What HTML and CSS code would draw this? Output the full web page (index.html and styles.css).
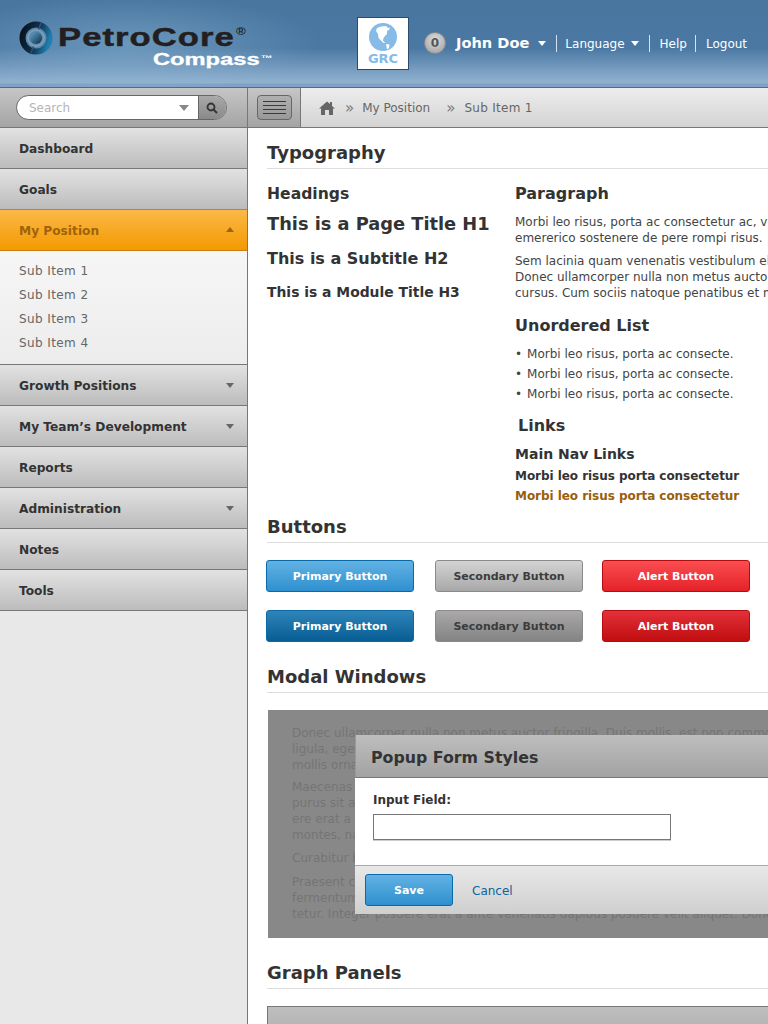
FILE: index.html
```html
<!DOCTYPE html>
<html lang="en">
<head>
  <meta charset="UTF-8">
  <title>PetroCore Compass - Style Guide</title>
  <link rel="stylesheet" href="styles.css">
</head>
<body>
  <header class="topbar">
    <div class="logo">
      <svg class="logo-mark" width="34" height="34" viewBox="0 0 34 34">
        <defs>
          <linearGradient id="ring" x1="0" y1="0.3" x2="1" y2="0.6">
            <stop offset="0" stop-color="#0b1522"/>
            <stop offset="0.5" stop-color="#0f2f4c"/>
            <stop offset="1" stop-color="#1f7fae"/>
          </linearGradient>
          <linearGradient id="core" x1="0" y1="0" x2="1" y2="1">
            <stop offset="0" stop-color="#5fa6c8"/>
            <stop offset="1" stop-color="#0c2c48"/>
          </linearGradient>
        </defs>
        <circle cx="17" cy="17" r="13.5" fill="none" stroke="url(#ring)" stroke-width="6"/>
        <path d="M22 2 L19 10 M12 32 L15 24" stroke="#2a5578" stroke-width="1.6"/>
        <circle cx="17" cy="17" r="8" fill="none" stroke="#7e9db5" stroke-width="2"/>
        <circle cx="17" cy="17" r="6" fill="url(#core)"/>
      </svg>
      <div class="logo-words">
        <div class="logo-name">PetroCore<sup>®</sup></div>
        <div class="logo-sub">Compass<sup>™</sup></div>
      </div>
    </div>
    <div class="grc">
      <svg width="28" height="28" viewBox="0 0 28 28">
        <circle cx="14" cy="14" r="14" fill="#85bbe6"/>
        <path d="M8 5 L12 3.500 L17 3 L19 5 L21 4.500 L20 7 L18 8 L18 11 L16 13 L14.500 15 L14 18 L16.500 20 L14.500 20 L11.500 17 L9.500 15 L9 11 L7 8 Z" fill="#fff"/>
        <path d="M17 21 L20.500 21.500 L20 25 L18 26.500 Z" fill="#fff"/>
      </svg>
      <span>GRC</span>
    </div>
    <div class="user-nav">
      <span class="badge">0</span>
      <a class="user-name">John Doe</a><i class="caret"></i>
      <a class="top-link lang">Language<i class="caret"></i></a>
      <a class="top-link help">Help</a>
      <a class="top-link logout">Logout</a>
    </div>
  </header>

  <div class="toolbar">
    <div class="search-wrap">
      <div class="search">
        <span class="search-text">Search</span>
        <i class="search-caret"></i>
        <button class="search-btn">
          <svg width="12" height="12" viewBox="0 0 12 12"><circle cx="5" cy="5" r="3.5" fill="none" stroke="#333" stroke-width="1.8"/><path d="M7.6 7.6 L11 11" stroke="#333" stroke-width="2"/></svg>
        </button>
      </div>
    </div>
    <div class="toggle-wrap">
      <div class="toggle"><span></span><span></span><span></span><span></span></div>
    </div>
    <div class="breadcrumb">
      <svg width="16" height="14" viewBox="0 0 16 14"><path d="M8 0.500 L11 3.100 L11 1 L13 1 L13 4.900 L16 7.500 L14 7.500 L14 14 L10 14 L10 9 L6 9 L6 14 L2 14 L2 7.500 L0 7.500 Z" fill="#666"/></svg>
      <span class="sep">»</span><span>My Position</span>
      <span class="sep">»</span><span class="crumb-last">Sub Item 1</span>
    </div>
  </div>

  <div class="main">
    <nav class="sidebar">
      <a class="nav-item">Dashboard</a>
      <a class="nav-item">Goals</a>
      <a class="nav-item active">My Position<i class="nav-arrow up"></i></a>
      <div class="sub-nav">
        <a>Sub Item 1</a>
        <a>Sub Item 2</a>
        <a>Sub Item 3</a>
        <a>Sub Item 4</a>
      </div>
      <a class="nav-item">Growth Positions<i class="nav-arrow"></i></a>
      <a class="nav-item">My Team’s Development<i class="nav-arrow"></i></a>
      <a class="nav-item">Reports</a>
      <a class="nav-item">Administration<i class="nav-arrow"></i></a>
      <a class="nav-item">Notes</a>
      <a class="nav-item">Tools</a>
    </nav>

    <section class="content">
      <h1 class="section-title">Typography</h1>
      <div class="type-cols">
        <div class="type-left">
          <h3 class="col-head">Headings</h3>
          <div class="h1-demo">This is a Page Title H1</div>
          <div class="h2-demo">This is a Subtitle H2</div>
          <div class="h3-demo">This is a Module Title H3</div>
        </div>
        <div class="type-right">
          <h3 class="col-head">Paragraph</h3>
          <p>Morbi leo risus, porta ac consectetur ac, vestibulum at eros.<br>emererico sostenere de pere rompi risus.</p>
          <p>Sem lacinia quam venenatis vestibulum eleifend.<br>Donec ullamcorper nulla non metus auctor fringilla.<br>cursus. Cum sociis natoque penatibus et magnis dis.</p>
          <h3 class="col-head list-head">Unordered List</h3>
          <ul>
            <li>Morbi leo risus, porta ac consecte.</li>
            <li>Morbi leo risus, porta ac consecte.</li>
            <li>Morbi leo risus, porta ac consecte.</li>
          </ul>
          <h3 class="col-head links-head">Links</h3>
          <div class="main-links">Main Nav Links</div>
          <a class="link-dark">Morbi leo risus porta consectetur</a>
          <a class="link-brown">Morbi leo risus porta consectetur</a>
        </div>
      </div>

      <h1 class="section-title">Buttons</h1>
      <div class="btn-grid">
        <button class="btn primary">Primary Button</button>
        <button class="btn secondary">Secondary Button</button>
        <button class="btn alert">Alert Button</button>
        <button class="btn primary hover">Primary Button</button>
        <button class="btn secondary hover">Secondary Button</button>
        <button class="btn alert hover">Alert Button</button>
      </div>

      <h1 class="section-title">Modal Windows</h1>
      <div class="modal-demo">
        <p>Donec ullamcorper nulla non metus auctor fringilla. Duis mollis, est non commodo luctus,<br>ligula, eget lacinia odio sem nec elit. Cras justo odio, dapibus ac facilisis in,<br>mollis ornare vel eu leo.</p>
        <p>Maecenas sed diam eget risus varius blandit sit amet non magna.<br>purus sit amet fermentum. Aenean lacinia bibendum nulla sed consectetur.<br>ere erat a ante venenatis dapibus posuere velit aliquet.<br>montes, nascetur ridiculus mus.</p>
        <p>Curabitur blandit tempus porttitor.</p>
        <p>Praesent commodo cursus magna, vel scelerisque nisl consectetur et.<br>fermentum massa justo sit amet risus. Etiam porta sem malesuada magna.<br>tetur. Integer posuere erat a ante venenatis dapibus posuere velit aliquet. Donec.</p>
        <div class="modal">
          <div class="modal-head">Popup Form Styles</div>
          <div class="modal-body">
            <label>Input Field:</label>
            <input type="text">
          </div>
          <div class="modal-foot">
            <button class="btn primary save">Save</button>
            <a class="cancel">Cancel</a>
          </div>
        </div>
      </div>

      <h1 class="section-title">Graph Panels</h1>
      <div class="graph-panel"></div>
    </section>
  </div>
</body>
</html>
```

FILE: styles.css
```css
html, body { margin: 0; height: 1024px; overflow: hidden; }
body { width: 768px; font-family: "DejaVu Sans", Verdana, sans-serif; font-size: 12px; color: #444; background: #fff; }
a { display: block; }
i { display: inline-block; }
button { font-family: inherit; }

/* top bar */
.topbar { height: 87px; display: flex; background: linear-gradient(#48769f 0, #4a78a3 48px, #8fb0cf 81px, #8fb0cf 83px, #7fa3c6 84px, #7fa3c6 87px); }
.logo { width: 357px; flex: none; display: flex; padding: 21px 0 0 19px; box-sizing: border-box; background: radial-gradient(ellipse 190px 48px at 130px 44px, rgba(150,190,220,.45), rgba(150,190,220,0)); }
.logo-mark { flex: none; }
.logo-words { margin-left: 5px; }
.logo-name { font-family: "Liberation Sans", sans-serif; font-weight: bold; font-size: 26px; line-height: 32px; color: #231f20; width: 160px; white-space: nowrap; letter-spacing: .8px; -webkit-text-stroke: .5px #231f20; transform: scaleX(1.33); transform-origin: left; }
.logo-name sup { font-size: 10px; vertical-align: 11px; line-height: 0; letter-spacing: 0; -webkit-text-stroke: 0; margin-left: 1px; }
.logo-sub { font-family: "Liberation Sans", sans-serif; font-weight: bold; font-size: 16px; line-height: 15px; color: #fff; margin: -1px 0 0 95px; white-space: nowrap; -webkit-text-stroke: .3px #fff; transform: scaleX(1.48); transform-origin: left; }
.logo-sub sup { font-size: 8px; vertical-align: 4px; line-height: 0; -webkit-text-stroke: 0; margin-left: 1px; }
.grc { width: 50px; height: 46px; margin-top: 17px; flex: none; background: #fff; border: 1px solid #2b4c6b; display: flex; flex-direction: column; align-items: center; padding-top: 5px; font-weight: bold; font-size: 13px; line-height: 15px; color: #85bbe6; }
.user-nav { display: flex; align-items: center; height: 22px; margin: 32px 0 0 15px; color: #fff; }
.badge { width: 22px; height: 22px; box-sizing: border-box; border: 1px solid #8a8a8a; border-radius: 50%; background: radial-gradient(circle at 50% 35%, #ddd, #9c9c9c); color: #555; font-weight: bold; font-size: 12px; line-height: 20px; text-align: center; }
.user-name { font-weight: bold; font-size: 14.6px; margin: -1px 0 0 10px; }
.caret { width: 0; height: 0; border: 4px solid transparent; border-top: 5px solid #fff; border-bottom: 0; margin-left: 9px; }
.top-link { height: 17px; line-height: 18px; border-left: 1px solid #d5e1ec; }
.lang { margin-left: 10px; padding: 0 10px 0 8px; }
.lang .caret { margin-left: 6px; vertical-align: 2px; }
.help { padding: 0 8px 0 10px; }
.logout { padding-left: 10px; }

/* toolbar */
.toolbar { height: 41px; display: flex; border-top: 1px solid #666; border-bottom: 1px solid #777; box-sizing: border-box; }
.search-wrap { flex: none; background: linear-gradient(#c6c6c6, #a4a4a4); border-right: 1px solid #777; padding-left: 16px; box-sizing: border-box; width: 248px; display: flex; align-items: center; }
.search { width: 211px; height: 25px; box-sizing: border-box; border: 1px solid #666; border-radius: 13px; background: #fff; display: flex; align-items: center; overflow: hidden; }
.search-text { color: #b5b5b5; font-size: 12px; margin-left: 12px; flex: 1; }
.search-caret { width: 0; height: 0; border: 5px solid transparent; border-top: 6px solid #888; border-bottom: 0; margin-right: 9px; }
.search-btn { width: 28px; height: 25px; border: 0; border-left: 1px solid #666; background: linear-gradient(#aaa, #888); padding: 0 2px 0 0; display: flex; align-items: center; justify-content: center; }
.toggle-wrap { width: 53px; flex: none; box-sizing: border-box; background: linear-gradient(#c6c6c6, #a4a4a4); border-right: 1px solid #777; display: flex; align-items: center; justify-content: center; }
.toggle { width: 35px; height: 25px; box-sizing: border-box; border: 1px solid #666; border-radius: 4px; background: linear-gradient(#b0b0b0, #999); display: flex; flex-direction: column; justify-content: center; align-items: center; gap: 3px; }
.toggle span { width: 23px; height: 1px; background: #3a3a3a; }
.breadcrumb { flex: 1; background: linear-gradient(#ededed, #d4d4d4); display: flex; align-items: center; padding-left: 18px; color: #666; font-size: 12px; }
.sep { margin: 0 8px 0 10px; font-size: 15px; color: #777; }
.sep + span + .sep { margin: 0 9px 0 16px; }
.crumb-last { letter-spacing: .3px; }

/* sidebar */
.main { display: flex; height: 896px; }
.sidebar { width: 248px; flex: none; box-sizing: border-box; background: #e8e8e8; border-right: 1px solid #777; }
.nav-item { height: 41px; box-sizing: border-box; border-bottom: 1px solid #777; background: linear-gradient(#e2e2e2, #bcbcbc); padding-left: 19px; line-height: 43px; font-weight: bold; font-size: 12.2px; color: #333; position: relative; }
.nav-item.active { background: linear-gradient(#fbb848, #f39a00); color: #a0620a; border-top: 1px solid #c98012; border-bottom: 1px solid #c98012; line-height: 42px; margin-top: -1px; height: 42px; }
.nav-arrow { position: absolute; right: 13px; top: 18px; width: 0; height: 0; border: 4px solid transparent; border-top: 5px solid #666; border-bottom: 0; }
.nav-arrow.up { top: 17px; border-top: 0; border-bottom: 5px solid #a0620a; }
.sub-nav { height: 114px; box-sizing: border-box; padding-top: 8px; background: linear-gradient(#f6f6f6, #ececec); border-bottom: 1px solid #777; }
.sub-nav a { height: 24px; line-height: 24px; padding-left: 19px; font-size: 12px; letter-spacing: .4px; color: #666; }

/* content */
.content { flex: 1; padding: 0 0 0 19px; min-width: 0; }
.section-title { margin: 0; height: 41px; box-sizing: border-box; padding-top: 13px; font-size: 18px; line-height: 23px; font-weight: bold; color: #333; border-bottom: 1px solid #ddd; white-space: nowrap; width: 600px; }
.type-cols { display: flex; height: 333px; }
.type-left { width: 248px; flex: none; }
.type-right { white-space: nowrap; }
.col-head { margin: 0; padding-top: 15px; font-size: 16px; line-height: 20px; font-weight: bold; color: #333; }
.type-left .col-head { font-size: 15.6px; }
.h1-demo { font-weight: bold; font-size: 17.8px; line-height: 24px; color: #333; margin-top: 8px; }
.h2-demo { font-weight: bold; font-size: 16px; line-height: 20px; color: #333; margin-top: 13px; }
.h3-demo { font-weight: bold; font-size: 13.9px; line-height: 18px; color: #333; margin-top: 14px; }
.type-right p { margin: 10px 0 0; line-height: 16px; }
.type-right p + p { margin-top: 7px; }
.list-head { padding-top: 15px; }
ul { list-style: none; margin: 8px 0 0; padding: 0; }
li { height: 20px; line-height: 20px; }
li::before { content: "•"; margin-right: 5px; }
.col-head.links-head { padding: 12px 0 0 3px; }
.main-links { font-weight: bold; font-size: 14px; line-height: 20px; color: #333; margin-top: 8px; }
.link-dark, .link-brown { font-weight: bold; line-height: 20px; color: #333; margin-top: 2px; letter-spacing: -.05px; }
.link-brown { color: #9a5f0c; margin-top: 0; }

/* buttons */
.btn-grid { display: grid; grid-template-columns: 169px 167px 148px; row-gap: 18px; margin: 17px 0 0 -1px; height: 92px; align-content: start; }
.btn { height: 32px; width: 148px; border-radius: 3px; border: 1px solid; font-weight: bold; font-size: 11px; padding: 0; }
.primary { background: linear-gradient(#62b2e3, #2f90cf); border-color: #0a6aa8; color: #fff; }
.primary.hover { background: linear-gradient(#2f84b8, #075e94); }
.secondary { background: linear-gradient(#d3d3d3, #a8a8a8); border-color: #8a8a8a; color: #3c3c3c; }
.secondary.hover { background: linear-gradient(#aaa8a8, #848484); }
.alert { background: linear-gradient(#fb4d50, #e4222a); border-color: #b30b0f; color: #fff; }
.alert.hover { background: linear-gradient(#e4313a, #bf0d10); }

/* modal */
.modal-demo { position: relative; height: 228px; margin: 17px 0 10px 1px; width: 600px; background: #888; box-sizing: border-box; padding: 15px 0 0 24px; color: #757575; white-space: nowrap; overflow: hidden; }
.modal-demo p { margin: 0 0 6px; line-height: 16px; }
.modal-demo p:nth-child(2) { margin-bottom: 7px; }
.modal-demo p:nth-child(3) { margin-bottom: 8px; }
.modal { position: absolute; left: 87px; top: 25px; width: 500px; height: 179px; background: #fff; color: #333; white-space: normal; }
.modal-head { height: 43px; box-sizing: border-box; border-bottom: 1px solid #777; background: linear-gradient(#bebebe, #a2a2a2); padding-left: 15px; font-weight: bold; font-size: 15.8px; line-height: 45px; border-left: 1px solid #999; }
.modal-body { height: 87px; box-sizing: border-box; padding: 14px 0 0 18px; }
.modal-body label { display: block; font-weight: bold; font-size: 12px; line-height: 16px; }
.modal-body input { display: block; width: 298px; height: 26px; box-sizing: border-box; margin-top: 6px; border: 1px solid #777; box-shadow: 0 1px 0 #ccc; background: #fff; }
.modal-foot { height: 49px; box-sizing: border-box; border-top: 1px solid #aaa; background: linear-gradient(#e8e8e8, #cfcfcf); display: flex; align-items: center; padding-left: 10px; }
.btn.save { width: 88px; }
.cancel { margin: 2px 0 0 19px; color: #0b63a0; font-size: 12px; }

.graph-panel { width: 600px; height: 60px; margin-top: 17px; box-sizing: border-box; border: 1px solid #777; background: linear-gradient(#bebebe, #a2a2a2); }
```
